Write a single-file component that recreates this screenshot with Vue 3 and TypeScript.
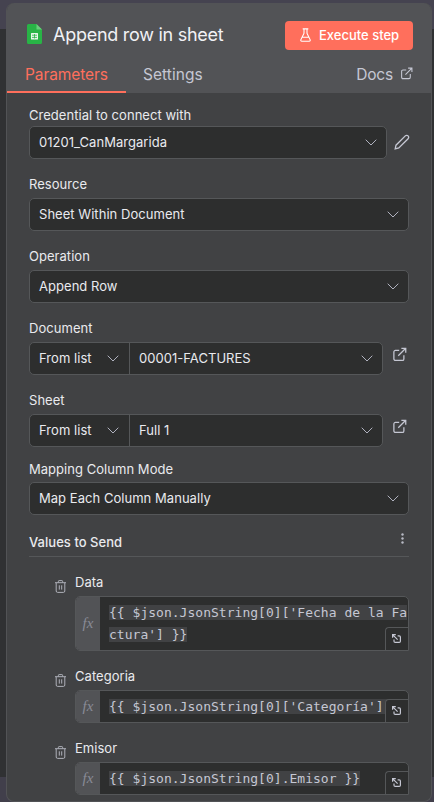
<script setup lang="ts">
interface Field {
  label: string
  value: string
  kind: 'credential' | 'select' | 'locator'
  tight?: boolean
}
interface Mapping {
  label: string
  lines: string[]
}

const fields: Field[] = [
  { label: 'Credential to connect with', value: '01201_CanMargarida', kind: 'credential' },
  { label: 'Resource', value: 'Sheet Within Document', kind: 'select' },
  { label: 'Operation', value: 'Append Row', kind: 'select' },
  { label: 'Document', value: '00001-FACTURES', kind: 'locator' },
  { label: 'Sheet', value: 'Full 1', kind: 'locator' },
  { label: 'Mapping Column Mode', value: 'Map Each Column Manually', kind: 'select', tight: true },
]

const mappings: Mapping[] = [
  { label: 'Data', lines: ["{{ $json.JsonString[0]['Fecha de la Fa", "ctura'] }}"] },
  { label: 'Categoria', lines: ["{{ $json.JsonString[0]['Categoría'] }}"] },
  { label: 'Emisor', lines: ['{{ $json.JsonString[0].Emisor }}'] },
]
</script>

<template>
  <div class="backdrop">
    <main class="panel">
      <header class="head">
        <div class="title-row">
          <svg class="sheet-icon" viewBox="0 0 15 20">
            <path d="M1.5 0H9.5L15 5.5V18.5A1.5 1.5 0 0 1 13.5 20H1.5A1.5 1.5 0 0 1 0 18.5V1.5A1.5 1.5 0 0 1 1.5 0Z" fill="#28b446" />
            <path d="M9.5 0L15 5.5H9.5Z" fill="#6ace7c" />
            <rect x="4" y="9" width="7" height="6.5" rx=".5" fill="#e6f6e9" />
            <path d="M5 11.2H10M5 13.4H10M7.5 10V14.5" stroke="#28b446" stroke-width=".8" />
          </svg>
          <h1 class="title">Append row in sheet</h1>
          <button class="execute">
            <svg class="flask" viewBox="0 0 11 14">
              <path d="M4 1V5Q4 5.4 3.8 5.8L.9 11.6Q.4 13.2 1.8 13.2H9.2Q10.6 13.2 10.1 11.6L7.2 5.8Q7 5.4 7 5V1M2.7.9H8.3M2.1 9.3H8.9" />
            </svg>
            <span class="execute-text">Execute step</span>
          </button>
        </div>
        <nav class="tabs">
          <a class="tab active">Parameters</a>
          <a class="tab second">Settings</a>
          <a class="tab docs">
            <span>Docs</span>
            <svg class="ext small" viewBox="0 0 24 24">
              <path d="M15 2h7v7M22 2 10 14M19 13v6a2.5 2.5 0 0 1-2.5 2.5h-11A2.5 2.5 0 0 1 3 19V8a2.5 2.5 0 0 1 2.5-2.5h6" />
            </svg>
          </a>
        </nav>
      </header>

      <section class="body">
        <div v-for="f in fields" :key="f.label" class="field" :class="{ tight: f.tight }">
          <label class="label">{{ f.label }}</label>
          <div class="line">
            <div class="input" :class="f.kind">
              <div v-if="f.kind === 'locator'" class="mode">
                <span>From list</span>
                <svg class="chev" viewBox="0 0 12 7"><path d="M.7.7 6 6 11.3.7" /></svg>
              </div>
              <div class="value">
                <span>{{ f.value }}</span>
                <svg class="chev" viewBox="0 0 12 7"><path d="M.7.7 6 6 11.3.7" /></svg>
              </div>
            </div>
            <svg v-if="f.kind === 'credential'" class="pencil" viewBox="0 0 16 16">
              <path d="M1.2 14.8 2 11.2 11.3 1.9A1.9 1.9 0 0 1 14.1 4.7L4.8 14Z" />
            </svg>
            <svg v-if="f.kind === 'locator'" class="ext" viewBox="0 0 24 24">
              <path d="M15 2h7v7M22 2 10 14M19 13v6a2.5 2.5 0 0 1-2.5 2.5h-11A2.5 2.5 0 0 1 3 19V8a2.5 2.5 0 0 1 2.5-2.5h6" />
            </svg>
          </div>
        </div>

        <div class="section">
          <h2 class="section-title">Values to Send</h2>
          <svg class="dots" viewBox="0 0 3 11">
            <circle cx="1.5" cy="1.5" r="1.2" /><circle cx="1.5" cy="5.5" r="1.2" /><circle cx="1.5" cy="9.5" r="1.2" />
          </svg>
        </div>

        <div v-for="m in mappings" :key="m.label" class="mapping">
          <svg class="trash" viewBox="0 0 11 13">
            <path d="M0 2.7H11M3.4 2.5V1.3Q3.4.6 4.1.6H6.9Q7.6.6 7.6 1.3V2.5M1.2 3V11Q1.2 12.4 2.6 12.4H8.4Q9.8 12.4 9.8 11V3M4.3 5.3V9.6M6.7 5.3V9.6" />
          </svg>
          <div class="mapping-main">
            <label class="label">{{ m.label }}</label>
            <div class="expr">
              <div class="fx">fx</div>
              <div class="code">
                <div v-for="l in m.lines" :key="l" class="code-line"><span class="hl">{{ l }}</span></div>
              </div>
              <div class="expand">
                <svg class="expand-icon" viewBox="0 0 9 9">
                  <path d="M.6 3.8V.6H3.8M.8.8 5.6 5.6M5.6 1.8H7.2Q8.4 1.8 8.4 3V7.2Q8.4 8.4 7.2 8.4H3.2Q2 8.4 2 7.2V5.4" />
                </svg>
              </div>
            </div>
          </div>
        </div>
      </section>
    </main>
  </div>
</template>

<style>
body {
  margin: 0;
  overflow: hidden;
}
</style>

<style scoped>
* {
  box-sizing: border-box;
}
.backdrop {
  width: 434px;
  height: 802px;
  padding: 3px 2px 0 6px;
  background: linear-gradient(#454350 0 29px, #303133 29px 777px, #413f4b 777px);
  font-family: Inter, sans-serif;
  font-size: 13px;
  letter-spacing: 0.04px;
  color: #e9eaee;
}
.panel {
  height: 799px;
  border: 1px solid #525356;
  border-top: 0;
  border-radius: 8px;
  background: #414244;
  overflow: hidden;
}
svg {
  flex: none;
  fill: none;
  stroke: #c5c7d3;
  stroke-width: 1;
}
.head {
  height: 90px;
  background: #525356;
  display: flex;
  flex-direction: column;
}
.title-row {
  display: flex;
  align-items: center;
  height: 62px;
  padding: 2px 18px 0 20px;
}
.sheet-icon {
  width: 15px;
  height: 20px;
  margin-top: -3px;
  stroke: none;
}
.title {
  margin: 0 0 0 11px;
  font-size: 18px;
  font-weight: 400;
  line-height: 24px;
  letter-spacing: -0.27px;
  color: #f1f1f5;
  white-space: nowrap;
}
.execute {
  display: flex;
  align-items: center;
  width: 128px;
  height: 29px;
  margin-left: auto;
  padding: 0 0 0 15px;
  gap: 8px;
  border: 0;
  border-radius: 4px;
  background: #ff6f5c;
  color: #fff;
  font: 500 13px Inter, sans-serif;
  white-space: nowrap;
}
.flask {
  width: 11px;
  height: 14px;
  stroke: #fff;
  stroke-width: 1.1;
}
.tabs {
  display: flex;
  height: 28px;
  font-size: 15.5px;
  line-height: 20px;
  letter-spacing: -0.1px;
  color: #c5c7d3;
}
.tab.active {
  width: 119px;
  height: 28px;
  padding-left: 18px;
  border-bottom: 2px solid #ff6f5c;
  color: #ff6f5c;
}
.second {
  padding-left: 17px;
  letter-spacing: 0.04px;
}
.docs {
  display: flex;
  gap: 7px;
  margin-left: auto;
  padding-right: 18px;
  letter-spacing: -0.2px;
}
.ext {
  width: 15px;
  height: 15px;
  margin: 5px 0 0 9px;
  stroke-width: 2;
}
.ext.small {
  width: 13px;
  height: 13px;
  margin: 2px 0 0;
}
.body {
  padding: 13px 22px 0;
}
.label {
  display: block;
  height: 23px;
  line-height: 18px;
  white-space: nowrap;
}
.field {
  height: 72px;
}
.field:first-child {
  height: 66px;
}
.field:first-child .label {
  height: 20px;
}
.field:first-child + .field {
  padding-top: 3px;
  height: 75px;
}
.field.tight {
  height: 73px;
  margin-top: -3px;
}
.tight .label {
  height: 22px;
}
.line {
  display: flex;
}
.input {
  display: flex;
  flex: none;
  width: 380px;
  height: 33px;
  border: 1px solid #555759;
  border-radius: 5px;
  background: #2d2e2e;
  line-height: 31px;
  white-space: nowrap;
}
.input.credential {
  width: 358px;
}
.input.locator {
  width: 354px;
}
.mode,
.value {
  display: flex;
  align-items: center;
  justify-content: space-between;
  padding: 0 9px;
}
.mode {
  width: 100px;
  padding-right: 10px;
  border-right: 1px solid #555759;
}
.value {
  flex: 1;
}
.chev {
  width: 12px;
  height: 7px;
  stroke: #b0b2bf;
}
.pencil {
  width: 16px;
  height: 16px;
  margin: 8px 0 0 7px;
  stroke-width: 1.3;
}
.section {
  display: flex;
  justify-content: space-between;
  width: 380px;
  height: 24px;
  margin-bottom: 16px;
  border-bottom: 1px solid #555759;
}
.section-title {
  margin: 0;
  font-size: 13px;
  font-weight: 500;
  line-height: 18px;
}
.dots {
  width: 3px;
  height: 11px;
  margin-right: 5px;
  fill: #b8bac4;
  stroke: none;
}
.mapping {
  display: flex;
  padding-left: 26px;
  margin-bottom: 16px;
}
.trash {
  width: 11px;
  height: 13px;
  margin: 7px 9px 0 0;
  stroke: #aeb0b9;
}
.expr {
  position: relative;
  display: flex;
  width: 334px;
  border: 1px solid #555759;
  border-radius: 5px 5px 0 5px;
  background: #2d2e2e;
  overflow: hidden;
}
.fx {
  display: flex;
  align-items: center;
  justify-content: center;
  width: 24px;
  background: #525356;
  color: #898b96;
  font: italic 15px "Liberation Serif", serif;
}
.code {
  padding: 5px 0 4px 9px;
  font-family: "DejaVu Sans Mono", monospace;
  font-size: 13px;
  line-height: 22px;
  letter-spacing: 0.02px;
  color: #c5c7d3;
  white-space: pre;
}
.code-line {
  height: 22px;
}
.hl {
  background: #414244;
}
.expand {
  position: absolute;
  right: 0;
  bottom: 0;
  display: flex;
  width: 23px;
  height: 23px;
  padding: 6px 0 0 6px;
  border: 1px solid #555759;
  border-width: 1px 0 0 1px;
  border-radius: 4px 0 0 0;
  background: #2d2e2e;
}
.expand-icon {
  width: 9px;
  height: 9px;
  stroke-width: 1.2;
}
</style>
